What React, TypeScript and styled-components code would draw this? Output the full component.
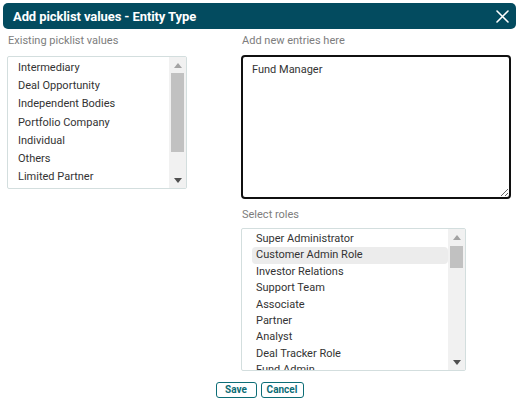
import styled, { createGlobalStyle } from "styled-components";

const GlobalStyle = createGlobalStyle`
  body {
    margin: 0;
    background: #ffffff;
    font-family: Roboto, "Liberation Sans", Arial, sans-serif;
  }
`;

const Page = styled.div`
  width: 519px;
  height: 403px;
  padding: 3px;
  box-sizing: border-box;
  overflow: hidden;
`;

const Header = styled.div`
  height: 26px;
  background: #034b5f;
  border-radius: 5px;
  display: flex;
  align-items: center;
  justify-content: space-between;
  padding: 0 7px 0 10px;
`;

const Title = styled.h1`
  margin: 0;
  font-size: 13px;
  font-weight: 700;
  color: #ffffff;
  letter-spacing: -0.1px;
`;

const CloseButton = styled.button`
  border: none;
  background: transparent;
  padding: 0;
  width: 14px;
  height: 14px;
  display: flex;
  align-items: center;
  justify-content: center;
  cursor: pointer;
`;

const Body = styled.div`
  display: grid;
  grid-template-columns: 180px 270px;
  column-gap: 54px;
  padding: 5px 0 0 4px;
`;

const Column = styled.div`
  display: flex;
  flex-direction: column;
`;

const Label = styled.div<{ $gap?: number }>`
  font-size: 11px;
  line-height: 14px;
  color: #7d7d7d;
  margin-left: 1px;
  margin-bottom: ${(p) => p.$gap ?? 8}px;
`;

const ListBox = styled.div<{ $width: number; $height: number }>`
  width: ${(p) => p.$width}px;
  height: ${(p) => p.$height}px;
  border: 1px solid #d3dede;
  border-radius: 2px;
  box-sizing: border-box;
  display: flex;
  overflow: hidden;
  background: #fff;
`;

const Options = styled.ul<{ $pad: number; $top: number }>`
  list-style: none;
  margin: 0;
  padding: ${(p) => p.$top}px 0 0 ${(p) => p.$pad}px;
  flex: 1;
  overflow: hidden;
`;

const Option = styled.li<{ $row: number; $selected?: boolean; $inset?: number }>`
  height: ${(p) => p.$row}px;
  line-height: ${(p) => p.$row}px;
  font-size: 11px;
  color: #333333;
  white-space: nowrap;
  padding-left: ${(p) => p.$inset ?? 0}px;
  border-radius: 4px;
  background: ${(p) => (p.$selected ? "#ececec" : "transparent")};
`;

const ScrollTrack = styled.div<{ $width: number }>`
  width: ${(p) => p.$width}px;
  background: #f1f1f1;
  display: flex;
  flex-direction: column;
  align-items: center;
`;

const ArrowButton = styled.div`
  height: 16px;
  width: 100%;
  display: flex;
  align-items: center;
  justify-content: center;
`;

const Rail = styled.div`
  flex: 1;
  width: 100%;
  display: flex;
  flex-direction: column;
  align-items: center;
`;

const Thumb = styled.div<{ $height: number; $offset: number }>`
  width: 13px;
  height: ${(p) => p.$height}px;
  margin-top: ${(p) => p.$offset}px;
  background: #c1c1c1;
`;

const TextArea = styled.textarea`
  width: 270px;
  height: 144px;
  box-sizing: border-box;
  border: 2px solid #101010;
  border-radius: 4px;
  padding: 6px 9px;
  margin: -1px 0 0 0;
  font-family: Roboto, "Liberation Sans", Arial, sans-serif;
  font-size: 11px;
  line-height: 14px;
  color: #333;
  outline: none;
  resize: vertical;
`;

const RolesLabel = styled(Label)`
  margin-top: 9px;
`;

const Actions = styled.div`
  display: flex;
  justify-content: center;
  gap: 4px;
  margin-top: 11px;
`;

const ActionButton = styled.button<{ $width: number }>`
  width: ${(p) => p.$width}px;
  height: 16px;
  padding: 0;
  border: 1px solid #0c6d76;
  border-radius: 3px;
  background: #fff;
  color: #0c6d76;
  font-family: Roboto, "Liberation Sans", Arial, sans-serif;
  font-weight: 700;
  font-size: 10px;
  line-height: 14px;
  cursor: pointer;
`;

function Arrow({ up, color }: { up?: boolean; color: string }) {
  return (
    <svg width="8" height="5" viewBox="0 0 8 5">
      <path d={up ? "M0 5 L4 0 L8 5 Z" : "M0 0 L8 0 L4 5 Z"} fill={color} />
    </svg>
  );
}

function Scrollbar({ width, thumb, offset }: { width: number; thumb: number; offset: number }) {
  return (
    <ScrollTrack $width={width}>
      <ArrowButton>
        <Arrow up color="#a3a3a3" />
      </ArrowButton>
      <Rail>
        <Thumb $height={thumb} $offset={offset} />
      </Rail>
      <ArrowButton>
        <Arrow color="#505050" />
      </ArrowButton>
    </ScrollTrack>
  );
}

const picklist = [
  "Intermediary",
  "Deal Opportunity",
  "Independent Bodies",
  "Portfolio Company",
  "Individual",
  "Others",
  "Limited Partner",
];

const roles = [
  "Super Administrator",
  "Customer Admin Role",
  "Investor Relations",
  "Support Team",
  "Associate",
  "Partner",
  "Analyst",
  "Deal Tracker Role",
  "Fund Admin",
];

export default function App() {
  return (
    <>
      <GlobalStyle />
      <Page>
        <Header>
          <Title>Add picklist values - Entity Type</Title>
          <CloseButton aria-label="Close">
            <svg width="13" height="13" viewBox="0 0 13 13">
              <path d="M1 1 L12 12 M12 1 L1 12" stroke="#fff" strokeWidth="1.6" strokeLinecap="round" />
            </svg>
          </CloseButton>
        </Header>
        <Body>
          <Column>
            <Label>Existing picklist values</Label>
            <ListBox $width={180} $height={133}>
              <Options $pad={10} $top={2}>
                {picklist.map((item) => (
                  <Option key={item} $row={18.2}>
                    {item}
                  </Option>
                ))}
              </Options>
              <Scrollbar width={17} thumb={79} offset={0} />
            </ListBox>
          </Column>
          <Column>
            <Label>Add new entries here</Label>
            <TextArea defaultValue="Fund Manager" />
            <RolesLabel $gap={6}>Select roles</RolesLabel>
            <ListBox $width={225} $height={143}>
              <Options $pad={10} $top={2}>
                {roles.map((role) => (
                  <Option key={role} $row={16.4} $inset={4} $selected={role === "Customer Admin Role"}>
                    {role}
                  </Option>
                ))}
              </Options>
              <Scrollbar width={17} thumb={22} offset={1} />
            </ListBox>
          </Column>
        </Body>
        <Actions>
          <ActionButton $width={41}>Save</ActionButton>
          <ActionButton $width={43}>Cancel</ActionButton>
        </Actions>
      </Page>
    </>
  );
}
